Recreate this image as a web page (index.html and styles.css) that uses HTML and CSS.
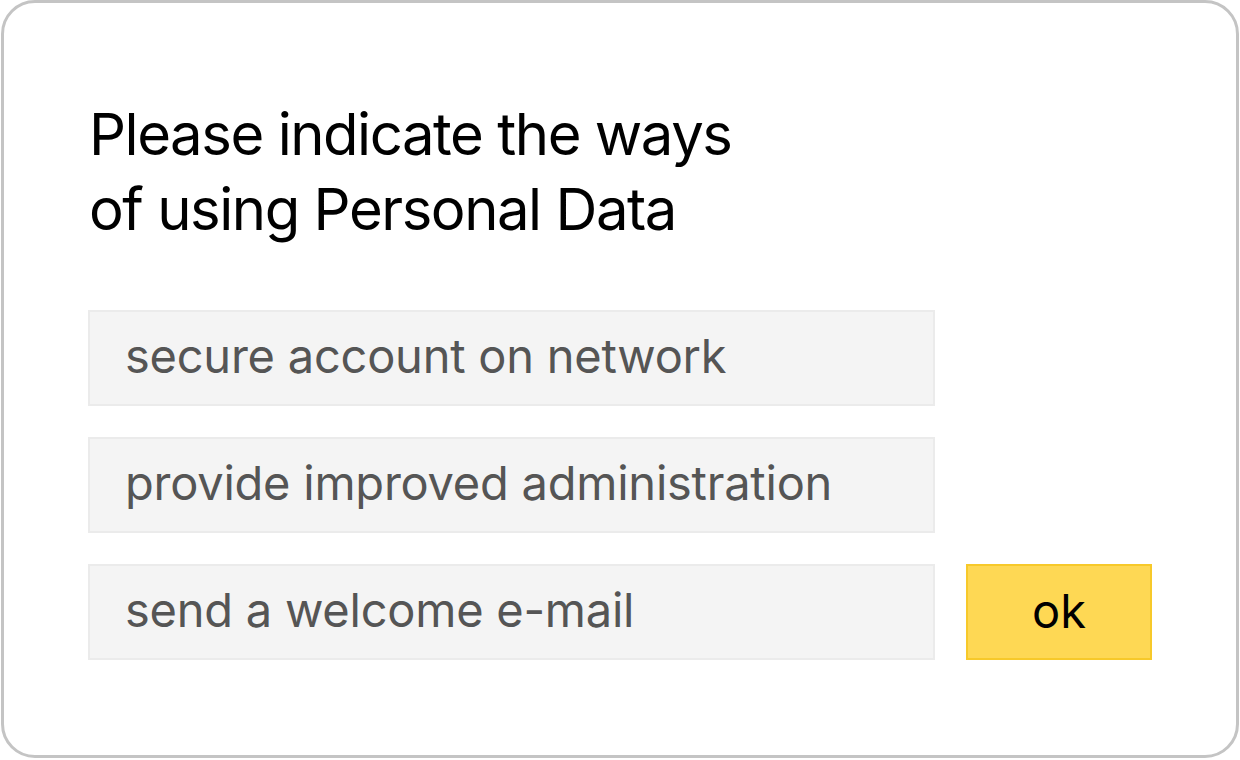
FILE: index.html
```html
<!DOCTYPE html>
<html lang="en">

<head>
    <meta charset="UTF-8">
    <meta name="viewport" content="width=device-width, initial-scale=1.0">
    <title>Personal Data</title>
    <link rel="stylesheet" href="styles.css">
</head>

<body>

    <div class="card">
        <h1 class="title">Please indicate the ways<br>of using Personal Data</h1>

        <div class="options">
            <div class="option">secure account on network</div>
            <div class="option">provide improved administration</div>
            <div class="row">
                <div class="option">send a welcome e-mail</div>
                <button class="ok" type="button">ok</button>
            </div>
        </div>
    </div>

</body>

</html>
```

FILE: styles.css
```css
body {
    font-family: 'Inter', 'Noto Sans', sans-serif;
    background-color: #ffffff;
    margin: 0;
    padding: 0;
}

/* Outer card */
.card {
    box-sizing: border-box;
    width: 1238px;
    height: 758px;
    margin: 0 1px;
    border: 3px solid #c4c4c4;
    border-radius: 34px;
    padding: 0 0 0 84px;
}

.title {
    margin: 0;
    padding: 94px 0 0 1px;
    font-size: 58px;
    font-weight: 400;
    line-height: 75px;
    letter-spacing: -0.025em;
    color: #000;
}

.options {
    margin-top: 63px;
    display: flex;
    flex-direction: column;
    gap: 31px;
}

.row {
    display: flex;
    gap: 31px;
}

.option {
    box-sizing: border-box;
    width: 847px;
    height: 96px;
    padding: 0 35px;
    background-color: #f4f4f4;
    border: 2px solid #ebebeb;
    font-size: 47px;
    line-height: 88px;
    letter-spacing: -0.005em;
    color: #555555;
}

.ok {
    box-sizing: border-box;
    width: 186px;
    height: 96px;
    padding: 0 0 4px;
    background-color: #fed854;
    border: 2px solid #f7c92a;
    border-radius: 0;
    font-family: inherit;
    font-size: 47px;
    color: #000;
    cursor: pointer;
}
```
